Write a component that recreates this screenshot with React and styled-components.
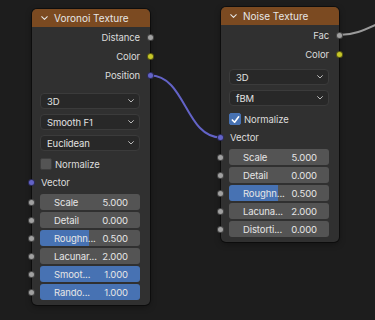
import React from 'react';
import styled, { createGlobalStyle } from 'styled-components';

const GlobalStyle = createGlobalStyle`
  body {
    margin: 0;
    background: #1d1d1d;
    font-family: Inter, 'Noto Sans', sans-serif;
  }
`;

const Canvas = styled.div`
  position: relative;
  width: 375px;
  height: 320px;
  overflow: hidden;
  background: #1d1d1d;
`;

const Links = styled.svg`
  position: absolute;
  inset: 0;
  pointer-events: none;
`;

const Node = styled.div`
  position: absolute;
  left: ${({ x }) => x}px;
  top: ${({ y }) => y}px;
  width: 118px;
  background: #303030;
  border-radius: 5px;
  box-shadow: 0 0 0 1px rgba(0, 0, 0, 0.45), 0 2px 6px rgba(0, 0, 0, 0.35);
`;

const Header = styled.div`
  height: 18px;
  display: flex;
  align-items: center;
  gap: 6px;
  padding-left: 9px;
  background: #7b4a21;
  border-radius: 5px 5px 0 0;
  color: #e6e6e6;
  font-size: 10px;
`;

const Body = styled.div`
  display: flex;
  flex-direction: column;
  padding: 1px 10px 5px 8px;
  font-size: 9.5px;
  letter-spacing: -0.1px;
`;

const OutputRow = styled.div`
  position: relative;
  height: 19px;
  display: flex;
  align-items: center;
  justify-content: flex-end;
  color: #dcdcdc;
`;

const InputRow = styled.div`
  position: relative;
  height: 19px;
  display: flex;
  align-items: center;
  padding-left: 1px;
  color: #dcdcdc;
`;

const SliderRow = styled.div`
  position: relative;
  height: 16px;
  display: flex;
`;

const Socket = styled.span`
  position: absolute;
  top: 50%;
  ${({ side }) => (side === 'right' ? 'right: -13.5px;' : 'left: -12.5px;')}
  width: 7px;
  height: 7px;
  margin-top: -3.5px;
  box-sizing: border-box;
  border-radius: 50%;
  border: 1px solid rgba(0, 0, 0, 0.55);
  background: ${({ color }) => color};
`;

const Stack = styled.div`
  display: flex;
  flex-direction: column;
  gap: ${({ gap }) => gap}px;
  margin-top: ${({ top }) => top}px;
`;

const Dropdown = styled.div`
  height: 16px;
  box-sizing: border-box;
  display: flex;
  align-items: center;
  justify-content: space-between;
  padding: 0 5px 0 6px;
  background: #282828;
  border: 1px solid #3b3b3b;
  border-radius: 4px;
  color: #e2e2e2;
`;

const CheckRow = styled.label`
  height: 18px;
  margin-top: 4px;
  display: flex;
  align-items: center;
  gap: 3px;
  color: #dcdcdc;
`;

const Box = styled.span`
  width: 12px;
  height: 12px;
  box-sizing: border-box;
  border-radius: 2px;
  display: flex;
  align-items: center;
  justify-content: center;
  background: ${({ checked }) => (checked ? '#4772b3' : '#545454')};
  border: 1px solid ${({ checked }) => (checked ? '#4772b3' : '#3d3d3d')};
`;

const Slider = styled.div`
  flex: 1;
  box-sizing: border-box;
  display: flex;
  align-items: center;
  justify-content: space-between;
  padding: 0 12px 0 14px;
  border-radius: 3px;
  background: linear-gradient(
    to right,
    #4772b3 ${({ fill }) => fill}%,
    #545454 ${({ fill }) => fill}%
  );
  color: #e6e6e6;
  white-space: nowrap;
`;

const Chevron = ({ size = 7, color = '#e6e6e6' }) => (
  <svg width={size} height={size * 0.6} viewBox="0 0 10 6">
    <polyline points="1,1 5,5 9,1" fill="none" stroke={color} strokeWidth="1.5" strokeLinecap="round" strokeLinejoin="round" />
  </svg>
);

const Check = () => (
  <svg width="9" height="9" viewBox="0 0 10 10">
    <polyline points="1.5,5.5 4,8 8.5,2" fill="none" stroke="#fff" strokeWidth="1.8" strokeLinecap="round" strokeLinejoin="round" />
  </svg>
);

const GRAY = '#a1a1a1';
const YELLOW = '#c7c729';
const PURPLE = '#6363c7';

const TextureNode = ({ x, y, title, outputs, dropGap, dropdowns, normalize, sliders }) => (
  <Node x={x} y={y}>
    <Header>
      <Chevron />
      {title}
    </Header>
    <Body>
      {outputs.map(([name, color]) => (
        <OutputRow key={name}>
          {name}
          <Socket side="right" color={color} />
        </OutputRow>
      ))}
      <Stack gap={5} top={dropGap}>
        {dropdowns.map((d) => (
          <Dropdown key={d}>
            {d}
            <Chevron size={6} color="#cfcfcf" />
          </Dropdown>
        ))}
      </Stack>
      <CheckRow>
        <Box checked={normalize}>{normalize && <Check />}</Box>
        Normalize
      </CheckRow>
      <InputRow>
        Vector
        <Socket side="left" color={PURPLE} />
      </InputRow>
      <Stack gap={2} top={2}>
        {sliders.map(([label, value, fill]) => (
          <SliderRow key={label}>
            <Socket side="left" color={GRAY} />
            <Slider fill={fill}>
              <span>{label}</span>
              <span>{value}</span>
            </Slider>
          </SliderRow>
        ))}
      </Stack>
    </Body>
  </Node>
);

export default function App() {
  return (
    <Canvas>
      <GlobalStyle />
      <Links width="375" height="320">
        <path d="M150 75.5 C 186 75.5, 185 137.5, 221 137.5" fill="none" stroke={PURPLE} strokeWidth="2" />
        <path d="M339 35 C 362 35, 372 24, 420 6" fill="none" stroke="#9a9a9a" strokeWidth="2" />
      </Links>
      <TextureNode
        x={32}
        y={9}
        title="Voronoi Texture"
        outputs={[['Distance', GRAY], ['Color', YELLOW], ['Position', PURPLE]]}
        dropGap={8}
        dropdowns={['3D', 'Smooth F1', 'Euclidean']}
        normalize={false}
        sliders={[
          ['Scale', '5.000', 0],
          ['Detail', '0.000', 0],
          ['Roughn...', '0.500', 49],
          ['Lacunar...', '2.000', 0],
          ['Smoot...', '1.000', 100],
          ['Rando...', '1.000', 100],
        ]}
      />
      <TextureNode
        x={221}
        y={7}
        title="Noise Texture"
        outputs={[['Fac', GRAY], ['Color', YELLOW]]}
        dropGap={5}
        dropdowns={['3D', 'fBM']}
        normalize
        sliders={[
          ['Scale', '5.000', 0],
          ['Detail', '0.000', 0],
          ['Roughn...', '0.500', 49],
          ['Lacuna...', '2.000', 0],
          ['Distorti...', '0.000', 0],
        ]}
      />
    </Canvas>
  );
}
